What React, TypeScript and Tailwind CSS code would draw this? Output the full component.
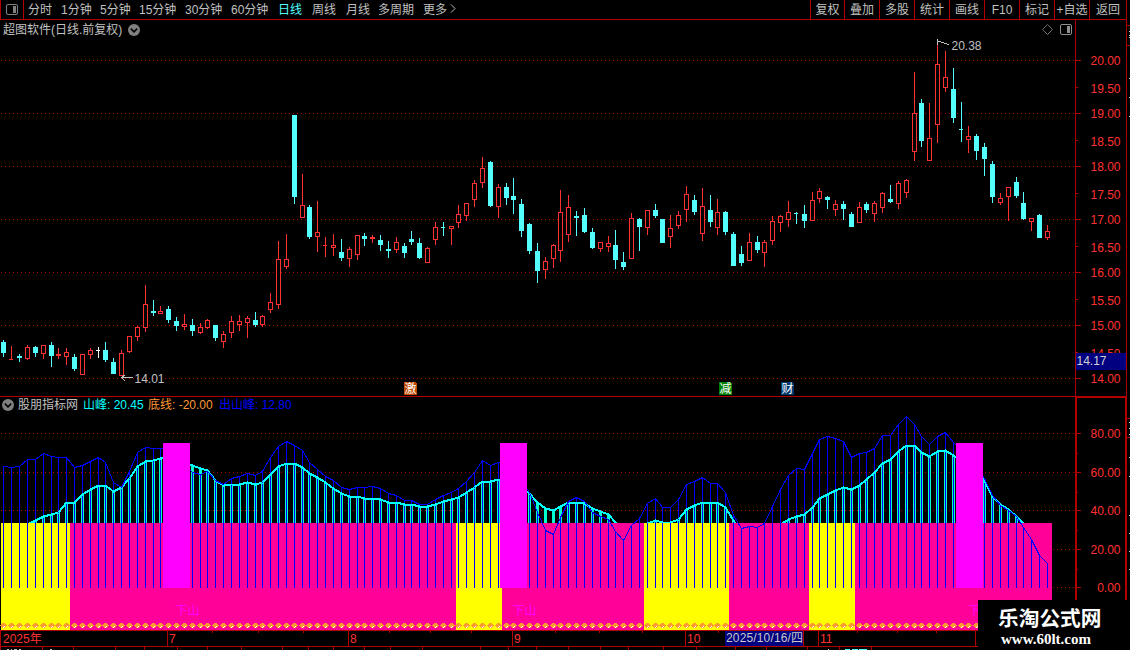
import { ReactNode } from "react";

type Candle = [kind: string, high: number, top: number, bottom: number, low: number];

const RED = "#b00000";
const UP = "#ff3232";
const DOWN = "#54ffff";
const FONT = "'Liberation Sans', 'Noto Sans CJK SC', sans-serif";

// kind, high, body top, body bottom, low
const candles: Candle[] = [
  ["c", 340, 342, 353, 357], ["r", 346, 359, 360, 360], ["c", 354, 356, 358, 362], ["r", 345, 347, 359, 360],
  ["c", 346, 347, 353, 357], ["r", 345, 345, 354, 359], ["c", 342, 345, 356, 367], ["r", 348, 354, 356, 359],
  ["r", 348, 352, 357, 365], ["c", 354, 357, 369, 371], ["r", 354, 354, 375, 375], ["r", 348, 350, 355, 359],
  ["w", 347, 350, 351, 358], ["c", 342, 350, 360, 362], ["c", 358, 362, 374, 374], ["r", 350, 353, 376, 376],
  ["r", 336, 336, 352, 353], ["r", 326, 327, 337, 341], ["r", 285, 304, 328, 332], ["c", 300, 311, 313, 316],
  ["r", 306, 311, 314, 314], ["c", 306, 309, 320, 323], ["c", 317, 321, 326, 331], ["r", 314, 324, 327, 330],
  ["c", 319, 325, 331, 336], ["r", 323, 327, 333, 334], ["r", 319, 320, 328, 329], ["c", 325, 325, 338, 341],
  ["r", 331, 334, 342, 348], ["r", 316, 321, 333, 338], ["r", 315, 321, 325, 331], ["r", 316, 318, 323, 338],
  ["c", 312, 320, 325, 327], ["r", 315, 316, 325, 327], ["r", 293, 302, 310, 313], ["r", 241, 259, 305, 309],
  ["r", 234, 259, 267, 269], ["c", 115, 115, 197, 204], ["r", 174, 205, 218, 218], ["c", 205, 207, 237, 239],
  ["r", 201, 232, 237, 252], ["r", 237, 245, 246, 257], ["r", 234, 245, 248, 256], ["c", 239, 252, 258, 261],
  ["r", 247, 249, 259, 267], ["r", 235, 235, 255, 260], ["c", 233, 236, 239, 246], ["r", 235, 237, 239, 243],
  ["c", 235, 240, 245, 251], ["c", 241, 249, 251, 258], ["r", 237, 242, 250, 253], ["c", 243, 246, 253, 258],
  ["c", 231, 239, 242, 245], ["c", 238, 243, 258, 259], ["r", 247, 248, 263, 263], ["r", 222, 227, 240, 245],
  ["c", 222, 227, 228, 236], ["r", 226, 226, 229, 245], ["r", 205, 214, 223, 228], ["r", 203, 203, 216, 221],
  ["r", 180, 183, 200, 207], ["r", 157, 168, 183, 188], ["c", 161, 162, 206, 207], ["r", 184, 187, 207, 218],
  ["c", 183, 187, 198, 205], ["c", 178, 196, 200, 214], ["c", 199, 204, 231, 237], ["c", 223, 224, 251, 254],
  ["c", 243, 251, 271, 283], ["r", 257, 261, 270, 279], ["r", 244, 245, 259, 268], ["r", 190, 212, 251, 262],
  ["r", 195, 207, 235, 242], ["c", 211, 216, 218, 236], ["c", 208, 215, 232, 233], ["c", 228, 232, 248, 249],
  ["r", 242, 242, 249, 252], ["r", 236, 243, 247, 252], ["c", 230, 245, 260, 269], ["c", 252, 262, 267, 270],
  ["r", 213, 218, 259, 259], ["c", 218, 219, 227, 251], ["r", 210, 210, 228, 235], ["c", 204, 210, 216, 218],
  ["c", 219, 219, 243, 243], ["r", 215, 228, 237, 248], ["r", 211, 215, 226, 229], ["r", 186, 194, 210, 222],
  ["c", 195, 200, 212, 215], ["r", 188, 206, 234, 241], ["c", 195, 210, 222, 227], ["r", 199, 212, 228, 235],
  ["c", 211, 212, 232, 235], ["c", 232, 234, 266, 266], ["c", 246, 254, 263, 266], ["r", 233, 242, 261, 261],
  ["c", 236, 242, 250, 253], ["r", 240, 242, 253, 267], ["r", 216, 221, 241, 245], ["r", 215, 216, 223, 232],
  ["r", 201, 212, 220, 227], ["c", 212, 213, 214, 224], ["c", 205, 214, 221, 228], ["r", 192, 200, 221, 221],
  ["r", 188, 191, 199, 203], ["c", 196, 197, 200, 209], ["r", 200, 204, 210, 216], ["c", 201, 204, 209, 220],
  ["c", 212, 214, 227, 227], ["r", 202, 207, 223, 223], ["c", 202, 204, 210, 213], ["r", 201, 203, 214, 222],
  ["r", 192, 193, 208, 213], ["c", 185, 199, 202, 203], ["r", 181, 183, 204, 209], ["r", 179, 180, 193, 198],
  ["r", 72, 113, 152, 161], ["c", 99, 103, 141, 147], ["r", 103, 138, 161, 161], ["r", 42, 64, 125, 143],
  ["r", 51, 77, 88, 92], ["c", 68, 89, 118, 123], ["c", 102, 129, 130, 142], ["r", 126, 136, 140, 153],
  ["c", 134, 136, 151, 160], ["c", 143, 147, 159, 176], ["c", 161, 164, 197, 203], ["r", 193, 198, 203, 205],
  ["r", 187, 187, 197, 221], ["c", 177, 182, 196, 198], ["c", 192, 203, 219, 220], ["r", 218, 218, 222, 231],
  ["c", 214, 215, 238, 238], ["r", 225, 231, 238, 240],
];

const exitLine = [
  466, 467, 466, 459, 459, 453, 456, 457, 457, 467, 465, 461, 457, 462, 482, 487, 471, 452, 447, 448,
  448, 449, 455, 465, 472, 474, 471, 480, 484, 478, 476, 473, 475, 471, 457, 446, 441, 445, 450, 462,
  469, 476, 480, 487, 489, 487, 487, 486, 488, 493, 495, 500, 500, 504, 504, 499, 495, 492, 488, 481,
  472, 460, 465, 462, 462, 470, 480, 492, 512, 530, 534, 517, 501, 497, 501, 512, 516, 519, 531, 540,
  525, 518, 503, 498, 507, 507, 499, 484, 481, 477, 483, 483, 492, 515, 528, 526, 527, 523, 506, 489,
  475, 468, 469, 453, 439, 436, 438, 441, 457, 453, 452, 448, 435, 435, 424, 416, 424, 436, 444, 436,
  432, 442, 450, 458, 468, 478, 495, 505, 510, 516, 527, 539, 555, 563,
];

const peakLine = [
  530, 530, 528, 524, 520, 516, 514, 512, 502, 502, 494, 489, 485, 485, 491, 487, 478, 466, 461, 460,
  458, 457, 458, 462, 465, 468, 470, 480, 485, 484, 484, 482, 484, 482, 474, 466, 463, 463, 467, 473,
  477, 482, 488, 493, 496, 496, 498, 498, 499, 502, 502, 504, 504, 506, 506, 504, 501, 499, 497, 492,
  487, 481, 481, 479, 479, 483, 488, 493, 502, 508, 510, 506, 502, 502, 503, 508, 511, 514, 522, 530,
  530, 530, 523, 520, 522, 522, 519, 509, 505, 502, 502, 502, 507, 520, 532, 534, 534, 534, 530, 524,
  519, 516, 514, 507, 498, 494, 490, 487, 489, 485, 479, 472, 463, 459, 451, 445, 445, 452, 456, 451,
  450, 455, 460, 465, 472, 480, 496, 504, 509, 516, 523, 534, 540, 545,
];

const zones: [number, number, string][] = [
  [1, 70, "#ffff00"], [70, 456, "#ff0099"], [456, 502, "#ffff00"], [502, 644, "#ff0099"],
  [644, 729, "#ffff00"], [729, 809, "#ff0099"], [809, 855, "#ffff00"], [855, 1052, "#ff0099"],
];

const periods: [string, string][] = [
  ["分时", "w-[33px]"], ["1分钟", "w-[39px]"], ["5分钟", "w-[39px]"], ["15分钟", "w-[46px]"],
  ["30分钟", "w-[46px]"], ["60分钟", "w-[47px]"], ["日线", "w-[34px]"], ["周线", "w-[34px]"],
  ["月线", "w-[32px]"], ["多周期", "w-[45px]"], ["更多", "w-[27px]"],
];

const actions = ["复权", "叠加", "多股", "统计", "画线", "F10", "标记", "+自选", "返回"];

const xAt = (i: number) => Math.floor(3.975 + 7.8452 * i);
const toPoints = (ys: number[]) => ys.map((y, i) => `${xAt(i) + 0.5},${y + 0.5}`).join(" ");

const Grid = ({ rows, width }: { rows: number[]; width: number }) => (
  <>
    {rows.map((y) => (
      <line key={y} x1={1} x2={width} y1={y + 0.5} y2={y + 0.5} stroke={RED} strokeDasharray="1 3" />
    ))}
  </>
);

const RoundChevron = () => (
  <svg width="12" height="12" viewBox="0 0 12 12" className="shrink-0">
    <circle cx="6" cy="6" r="6" fill="#808080" />
    <path d="M2.8 4.6 6 7.8 9.2 4.6" fill="none" stroke="#000" strokeWidth="1.6" />
  </svg>
);

const PanelIcon = ({ color }: { color: string }) => (
  <svg width="12" height="11" viewBox="0 0 12 11">
    <rect x="0.5" y="0.5" width="11" height="10" rx="1.5" fill="none" stroke={color} />
    <rect x="7" y="2" width="3" height="7" fill={color} />
  </svg>
);

const Toolbar = () => (
  <header className="flex h-5 w-[1127px] shrink-0 border-b border-r border-[#b00000] leading-[20px]">
    <div className="flex w-6 items-center justify-center border-x border-[#b00000] pb-px">
      <PanelIcon color="#808080" />
    </div>
    <nav className="flex pl-1">
      {periods.map(([name, width]) => (
        <span key={name} className={`${width} whitespace-nowrap ${name === "日线" ? "text-[#54ffff]" : ""}`}>
          {name}
        </span>
      ))}
      <svg width="8" height="18" viewBox="0 0 8 18" className="shrink-0">
        <path d="M1 4.5 5 8.5 1 12.5" fill="none" stroke="#c0c0c0" />
      </svg>
    </nav>
    <div className="ml-auto flex">
      {actions.map((name) => (
        <span
          key={name}
          className="w-[35px] whitespace-nowrap border-l border-[#b00000] text-center first:w-[34px] last:w-[37px]"
        >
          {name}
        </span>
      ))}
    </div>
  </header>
);

const Axis = ({ top, height, thick, children }: { top: number; height: number; thick?: boolean; children: ReactNode }) => (
  <svg
    width="55"
    height={height}
    viewBox={`1075 ${top} 55 ${height}`}
    shapeRendering="crispEdges"
    className="shrink-0"
    fontFamily={FONT}
    fontSize="12"
  >
    <rect x="1075" y={top} width={thick ? 2 : 1} height={height} fill={RED} />
    <rect x={thick ? 1125 : 1126} y={top} width={thick ? 2 : 1} height={height} fill={RED} />
    {children}
  </svg>
);

const AxisLabel = ({ y, children }: { y: number; children: ReactNode }) => (
  <text x="1120.5" y={y + 5} textAnchor="end" fill={UP}>
    {children}
  </text>
);

const priceLabels: [number, string][] = [
  [60, "20.00"], [88, "19.50"], [113, "19.00"], [141, "18.50"], [166, "18.00"], [194, "17.50"], [219, "17.00"],
  [247, "16.50"], [272, "16.00"], [300, "15.50"], [325, "15.00"], [353, "14.50"], [378, "14.00"],
];

const Badge = ({ x, fill, children }: { x: number; fill: string; children: ReactNode }) => (
  <>
    <path d={`M${x} 382h12l1 2v11h-13z`} fill={fill} />
    <text x={x + 0.5} y="393" fill="#fff">
      {children}
    </text>
  </>
);

const PriceChart = () => (
  <section className="relative flex h-[377px] shrink-0">
    <svg
      width="1075"
      height="377"
      viewBox="0 20 1075 377"
      shapeRendering="crispEdges"
      className="shrink-0"
      fontFamily={FONT}
      fontSize="12"
    >
      <Grid rows={[60, 113, 166, 219, 272, 325, 378]} width={1075} />
      {candles.map(([kind, high, top, bottom, low], i) => {
        const x = xAt(i);
        const color = kind === "r" ? UP : kind === "c" ? DOWN : "#fff";
        const hollow = kind === "r" && bottom - top > 2;
        const thin = bottom - top === 1;
        return (
          <g key={i} fill={color}>
            <rect x={x} y={high} width="1" height={low - high} />
            {hollow ? (
              <rect x={x - 1.5} y={top + 0.5} width="4" height={bottom - top - 1} fill="#000" stroke={color} />
            ) : (
              <rect x={x - 2} y={top} width={thin ? 4 : 5} height={bottom - top} />
            )}
          </g>
        );
      })}
      <path d="M937 39.5h1M937.5 40v5M938 41.5h3M941 42.5h3M944 43.5h3M947 44.5h2" stroke="#c0c0c0" fill="none" />
      <text x="951.5" y="50" fill="#c0c0c0">20.38</text>
      <path d="M121 377.5H133M121.5 377.5l4-3M121.5 377.5l4 4" stroke="#c0c0c0" fill="none" />
      <text x="134.5" y="383" fill="#c0c0c0">14.01</text>
      <Badge x={404} fill="#c04800">激</Badge>
      <Badge x={719} fill="#008000">减</Badge>
      <Badge x={781} fill="#003870">财</Badge>
      <rect x="0" y="396" width="1075" height="1" fill={RED} />
    </svg>
    <Axis top={20} height={377}>
      {priceLabels.map(([y, label], i) => (
        <g key={label}>
          <rect x="1076" y={i % 2 ? y - 1 : y} width={i % 2 ? 2 : 5} height="1" fill={RED} />
          <AxisLabel y={y}>{label}</AxisLabel>
        </g>
      ))}
      <rect x="1076" y="353" width="50" height="17" fill="#000080" />
      <text x="1076.5" y="365" fill="#d0d0d0">14.17</text>
      <rect x="1075" y="396" width="52" height="1" fill={RED} />
      <rect x="1127" y="25" width="3" height="1" fill={RED} />
      <rect x="1127" y="45" width="3" height="1" fill={RED} />
      {[31, 35, 37, 78, 97, 116].map((y) => (
        <rect key={y} x="1129" y={y} width="1" height="1" fill="#c0c0c0" />
      ))}
    </Axis>
    <div className="absolute left-[3px] top-0 flex h-[19px] items-center gap-1.5 whitespace-nowrap">
      <span>超图软件(日线.前复权)</span>
      <RoundChevron />
    </div>
    <div className="absolute right-[58px] top-0 flex h-[19px] items-center gap-[7px]">
      <svg width="11" height="11" viewBox="0 0 11 11">
        <path d="M5.5 0.5 10.5 5.5 5.5 10.5 0.5 5.5z" fill="none" stroke="#707070" />
      </svg>
      <PanelIcon color="#909090" />
    </div>
  </section>
);

const IndicatorChart = () => (
  <section className="relative flex h-[233px] shrink-0">
    <svg
      width="1075"
      height="233"
      viewBox="0 397 1075 233"
      shapeRendering="crispEdges"
      className="shrink-0"
      fontFamily={FONT}
      fontSize="12"
    >
      <Grid rows={[433, 472, 510, 549, 587]} width={1075} />
      {peakLine.map((y, i) => y < 523 && <rect key={i} x={xAt(i) - 1} y={y} width="3" height={523 - y} fill="#00ffcc" />)}
      {zones.map(([from, to, fill]) => (
        <rect key={from} x={from} y="523" width={to - from} height="107" fill={fill} />
      ))}
      <clipPath id="above">
        <rect x="0" y="397" width="1075" height="126" />
      </clipPath>
      {exitLine.map((y, i) => (
        <rect key={i} x={xAt(i)} y={y} width="1" height={588 - y} fill="#0000ff" />
      ))}
      <polyline points={toPoints(peakLine)} clipPath="url(#above)" fill="none" stroke="#00ffff" strokeWidth="2" />
      <polyline points={toPoints(exitLine)} fill="none" stroke="#0000ff" />
      {[163, 500, 956].map((x) => (
        <g key={x} fill="#ff00ff">
          <rect x={x} y="443" width="27" height="145" />
          <text x={x + 12.5} y="615">下山</text>
        </g>
      ))}
      {candles.map((_, i) => {
        const x = xAt(i);
        return (
          <g key={i}>
            <path d={`M${x - 1} 623h3v1h1v1h1v1h-1v1h-1v1h-3v-1h-1v-1h-1v-1h1v-1h1z`} fill="#ff9933" />
            <path d={`M${x + 1} 626h1v1h-1v1h-1v-1h1z`} fill="#fff" />
          </g>
        );
      })}
    </svg>
    <Axis top={397} height={233} thick>
      {[80, 60, 40, 20, 0].map((value, i) => {
        const y = [433, 472, 510, 549, 587][i];
        return (
          <g key={value}>
            <rect x="1077" y={y} width="4" height="1" fill={RED} />
            {value > 0 && <rect x="1077" y={y + 20} width="1" height="1" fill={RED} />}
            <AxisLabel y={y}>{value.toFixed(2)}</AxisLabel>
          </g>
        );
      })}
      <rect x="1075" y="397" width="52" height="1" fill={RED} />
      <rect x="1127" y="418" width="3" height="1" fill={RED} />
      <rect x="1127" y="437" width="3" height="1" fill={RED} />
      {[422, 428, 434, 457, 476, 515, 533, 551, 569].map((y) => (
        <rect key={y} x="1129" y={y} width="1" height="1" fill="#c0c0c0" />
      ))}
    </Axis>
    <div className="absolute left-0.5 top-0 flex h-4 items-center whitespace-nowrap">
      <RoundChevron />
      <span className="w-[69px] pl-1">股朋指标网</span>
      <span className="w-[65px] text-[#00ffff]">山峰: 20.45</span>
      <span className="w-[71px] text-[#ff9933]">底线: -20.00</span>
      <span className="text-[#0000ff]">出山峰: 12.80</span>
    </div>
  </section>
);

const TimeAxis = () => (
  <footer className="relative flex h-5 shrink-0 flex-col">
    <div className="flex h-[17px] border-y border-[#b00000] leading-[16px] text-[#ff3232]">
      <span className="w-[167px] border-l border-[#b00000] pl-0.5">2025年</span>
      <span className="w-[181px] border-l border-[#b00000] pl-px">7</span>
      <span className="w-[164px] border-l border-[#b00000] pl-px">8</span>
      <span className="w-[173px] border-l border-[#b00000] pl-px">9</span>
      <span className="w-[133px] border-l border-[#b00000] pl-px">10</span>
      <span className="w-[157px] border-l border-[#b00000] pl-px">11</span>
      <span className="border-l border-[#b00000]" />
    </div>
    <svg width="978" height="20" viewBox="0 630 978 20" className="absolute left-0 top-0" shapeRendering="crispEdges">
      {[212, 258, 303, 389, 430, 471, 555, 599, 642, 718, 857, 897, 936].map((x) => (
        <rect key={x} x={x} y="631" width="1" height="2" fill={RED} />
      ))}
      {[
        0, 42, 73, 115, 144, 177, 207, 241, 282, 308, 333, 364, 390, 422, 480, 508, 536, 568, 600, 628, 663, 696, 735,
        766, 807, 839, 871,
      ].map((x) => (
        <rect key={x} x={x} y="647" width="1" height="3" fill={RED} />
      ))}
      <path d="M7 649.5h2M11 649.5h1M14 649.5h3M19 649.5h2M50 649.5h2M828 649.5h1" stroke="#c0c0c0" />
      <path d="M845 649.5h5M852 649.5h6M859 649.5h8" stroke={DOWN} />
    </svg>
    <span className="absolute left-[725px] top-px h-[15px] w-[79px] overflow-hidden whitespace-nowrap border-r border-[#b00000] bg-[#000080] pl-px leading-[15px] tracking-[0.15px] text-[#c8c8c8]">
      2025/10/16/四
    </span>
  </footer>
);

const App = () => {
  return (
    <div className="relative flex h-[650px] w-[1130px] flex-col overflow-hidden bg-black font-['Liberation_Sans','Noto_Sans_CJK_SC',sans-serif] text-[12px] text-[#c0c0c0]">
      <Toolbar />
      <PriceChart />
      <IndicatorChart />
      <TimeAxis />
      <div className="absolute bottom-0 right-0 flex h-[50px] w-[152px] flex-col bg-black pt-[7px] text-white">
        <span className="pl-5 text-[20.7px] font-bold leading-6">乐淘公式网</span>
        <span className="pl-[23px] font-['Liberation_Serif',serif] text-[15px] font-bold leading-[17px]">www.60lt.com</span>
      </div>
    </div>
  );
};

export default App;
